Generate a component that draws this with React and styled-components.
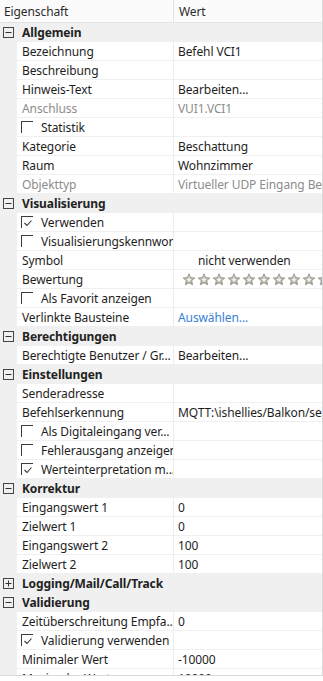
import React from 'react';
import styled, { createGlobalStyle } from 'styled-components';

const GlobalStyle = createGlobalStyle`
  html, body {
    margin: 0;
    padding: 0;
    background: #ffffff;
  }
  body {
    font-family: "Segoe UI", "Noto Sans", "Open Sans", sans-serif;
    font-size: 12px;
    letter-spacing: -0.1px;
    color: #1e1e1e;
  }
`;

const Grid = styled.div`
  width: 323px;
  height: 676px;
  overflow: hidden;
  border-right: 1px solid #d9d9d9;
  border-bottom: 1px solid #d9d9d9;
  box-sizing: border-box;
  background: #fff;
`;

const HeaderRow = styled.div`
  display: grid;
  grid-template-columns: 174px 1fr;
  height: 23px;
  background: #fbfbfb;
  border-bottom: 1px solid #e3e3e3;
  box-sizing: border-box;
`;

const HeaderCell = styled.div`
  display: flex;
  align-items: center;
  padding-left: ${props => props.$pad}px;
  color: #2b2b2b;
  border-right: ${props => (props.$divider ? '1px solid #e3e3e3' : 'none')};
`;

const CategoryRow = styled.div`
  display: flex;
  align-items: center;
  height: 19px;
  background: #f0f0f0;
  font-weight: bold;
  color: #222;
`;

const Toggle = styled.span`
  width: 17px;
  display: flex;
  justify-content: center;
  align-items: center;
  margin-right: 5px;
`;

const Row = styled.div`
  display: grid;
  grid-template-columns: 17px 156px 1px 1fr;
  height: 19px;
`;

const Gutter = styled.div`
  background: #f0f0f0;
`;

const NameCell = styled.div`
  display: flex;
  align-items: center;
  padding-left: ${props => (props.$check ? 4 : 5)}px;
  border-bottom: 1px solid #f0f0f0;
  white-space: nowrap;
  overflow: hidden;
  color: ${props => (props.$disabled ? '#8c8c8c' : '#1e1e1e')};
`;

const Divider = styled.div`
  background: #ededed;
`;

const ValueCell = styled.div`
  display: flex;
  align-items: center;
  padding-left: ${props => props.$indent || 4}px;
  border-bottom: 1px solid #f0f0f0;
  white-space: nowrap;
  overflow: hidden;
  color: ${props => (props.$link ? '#3a7fd5' : props.$disabled ? '#8c8c8c' : '#1e1e1e')};
`;

const CheckBox = styled.span`
  width: 12px;
  height: 12px;
  border-top: 1px solid #3c3c3c;
  border-left: 1px solid #3c3c3c;
  box-sizing: border-box;
  margin-right: 8px;
  display: flex;
  align-items: center;
  justify-content: center;
  flex-shrink: 0;
`;

const Stars = styled.div`
  display: flex;
  flex-shrink: 0;
`;

function ToggleIcon({ open }) {
  return (
    <svg width="11" height="11" viewBox="0 0 11 11">
      <rect x="0.5" y="0.5" width="10" height="10" fill="none" stroke="#444" />
      <line x1="2.5" y1="5.5" x2="8.5" y2="5.5" stroke="#333" />
      {!open && <line x1="5.5" y1="2.5" x2="5.5" y2="8.5" stroke="#333" />}
    </svg>
  );
}

function Check({ checked }) {
  return (
    <CheckBox>
      {checked && (
        <svg width="10" height="10" viewBox="0 0 10 10">
          <polyline points="1.5,5 4,7.5 8.5,2.5" fill="none" stroke="#333" strokeWidth="1.1" />
        </svg>
      )}
    </CheckBox>
  );
}

function Star() {
  return (
    <svg width="15" height="13" viewBox="0 0 15 13" style={{ flexShrink: 0 }}>
      <defs>
        <linearGradient id="sg" x1="0" y1="0" x2="0" y2="1">
          <stop offset="0" stopColor="#d6d2ca" />
          <stop offset="1" stopColor="#a9a49a" />
        </linearGradient>
      </defs>
      <path
        d="M7 0.8 L8.7 4.6 L12.8 5 L9.7 7.7 L10.6 11.8 L7 9.7 L3.4 11.8 L4.3 7.7 L1.2 5 L5.3 4.6 Z"
        fill="url(#sg)"
        stroke="#8f8a80"
        strokeWidth="0.8"
      />
      <path d="M7 4 L7.8 5.9 L9.6 6.1 L8.2 7.3 L8.6 9.1 L7 8.2 L5.4 9.1 L5.8 7.3 L4.4 6.1 L6.2 5.9 Z" fill="#f4f2ee" />
    </svg>
  );
}

const sections = [
  {
    title: 'Allgemein',
    open: true,
    rows: [
      { name: 'Bezeichnung', value: 'Befehl VCI1' },
      { name: 'Beschreibung', value: '' },
      { name: 'Hinweis-Text', value: 'Bearbeiten...' },
      { name: 'Anschluss', value: 'VUI1.VCI1', disabled: true },
      { name: 'Statistik', check: false },
      { name: 'Kategorie', value: 'Beschattung' },
      { name: 'Raum', value: 'Wohnzimmer' },
      { name: 'Objekttyp', value: 'Virtueller UDP Eingang Bef...', disabled: true },
    ],
  },
  {
    title: 'Visualisierung',
    open: true,
    rows: [
      { name: 'Verwenden', check: true },
      { name: 'Visualisierungskennwort', check: false },
      { name: 'Symbol', value: 'nicht verwenden', indent: 24 },
      { name: 'Bewertung', stars: true, indent: 8 },
      { name: 'Als Favorit anzeigen', check: false },
      { name: 'Verlinkte Bausteine', value: 'Auswählen...', link: true },
    ],
  },
  {
    title: 'Berechtigungen',
    open: true,
    rows: [{ name: 'Berechtigte Benutzer / Gr...', value: 'Bearbeiten...' }],
  },
  {
    title: 'Einstellungen',
    open: true,
    rows: [
      { name: 'Senderadresse', value: '' },
      { name: 'Befehlserkennung', value: 'MQTT:\\ishellies/Balkon/se...' },
      { name: 'Als Digitaleingang ver...', check: false },
      { name: 'Fehlerausgang anzeigen', check: false },
      { name: 'Werteinterpretation m...', check: true },
    ],
  },
  {
    title: 'Korrektur',
    open: true,
    rows: [
      { name: 'Eingangswert 1', value: '0' },
      { name: 'Zielwert 1', value: '0' },
      { name: 'Eingangswert 2', value: '100' },
      { name: 'Zielwert 2', value: '100' },
    ],
  },
  { title: 'Logging/Mail/Call/Track', open: false, rows: [] },
  {
    title: 'Validierung',
    open: true,
    rows: [
      { name: 'Zeitüberschreitung Empfa...', value: '0' },
      { name: 'Validierung verwenden', check: true },
      { name: 'Minimaler Wert', value: '-10000' },
      { name: 'Maximaler Wert', value: '10000' },
    ],
  },
];

function PropertyRow({ row }) {
  const isCheck = row.check !== undefined;
  return (
    <Row>
      <Gutter />
      <NameCell $check={isCheck} $disabled={row.disabled}>
        {isCheck && <Check checked={row.check} />}
        {row.name}
      </NameCell>
      <Divider />
      <ValueCell $indent={row.indent} $link={row.link} $disabled={row.disabled}>
        {row.stars ? (
          <Stars>
            {Array.from({ length: 10 }).map((_, i) => (
              <Star key={i} />
            ))}
          </Stars>
        ) : (
          row.value
        )}
      </ValueCell>
    </Row>
  );
}

export default function App() {
  return (
    <>
      <GlobalStyle />
      <Grid>
        <HeaderRow>
          <HeaderCell $pad={4} $divider>Eigenschaft</HeaderCell>
          <HeaderCell $pad={5}>Wert</HeaderCell>
        </HeaderRow>
        {sections.map(section => (
          <React.Fragment key={section.title}>
            <CategoryRow>
              <Toggle>
                <ToggleIcon open={section.open} />
              </Toggle>
              {section.title}
            </CategoryRow>
            {section.rows.map(row => (
              <PropertyRow key={row.name} row={row} />
            ))}
          </React.Fragment>
        ))}
      </Grid>
    </>
  );
}
